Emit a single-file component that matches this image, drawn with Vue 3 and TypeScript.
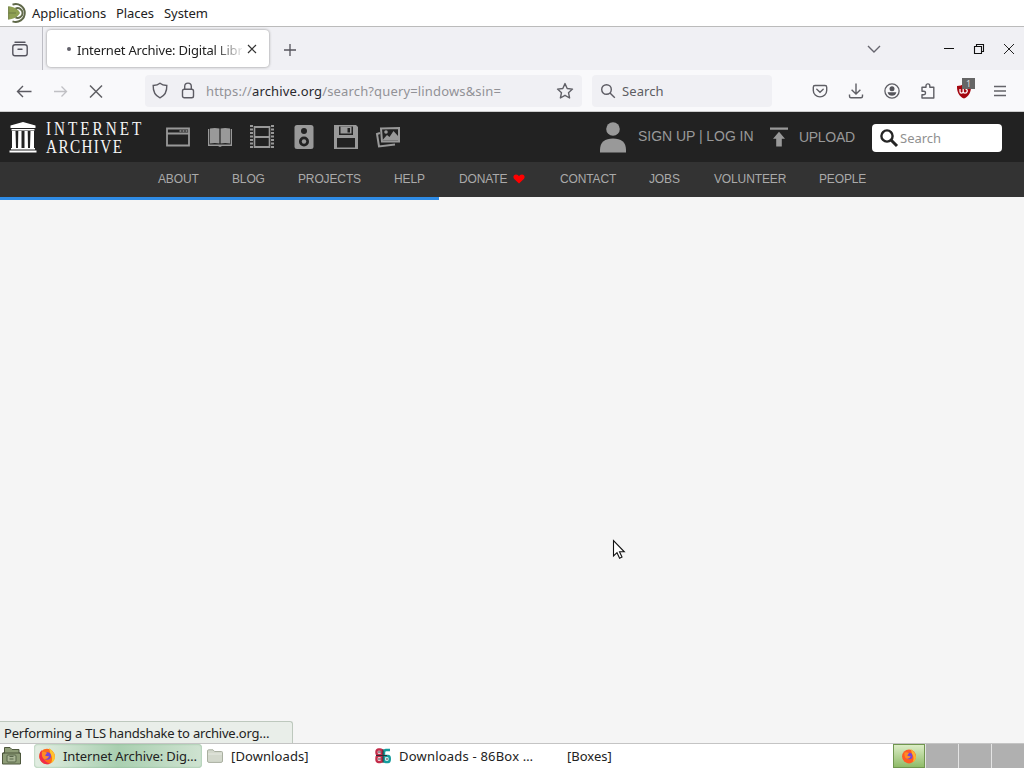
<script setup lang="ts">
interface NavLink { label: string; width: number; heart?: boolean }

const menus = [
  { label: 'Applications', width: 84 },
  { label: 'Places', width: 48 },
  { label: 'System', width: 50 },
]

const links: NavLink[] = [
  { label: 'ABOUT', width: 74 },
  { label: 'BLOG', width: 66 },
  { label: 'PROJECTS', width: 96 },
  { label: 'HELP', width: 65 },
  { label: 'DONATE', width: 101, heart: true },
  { label: 'CONTACT', width: 89 },
  { label: 'JOBS', width: 65 },
  { label: 'VOLUNTEER', width: 105 },
  { label: 'PEOPLE', width: 60 },
]

const progress = 439
</script>

<template>
  <div class="desktop">
    <header class="panel">
      <svg class="distro" width="22" height="22" viewBox="0 0 22 22">
        <path d="M1.500 4.200 C7 4.500 11 7 13 11 C11 14.500 7 17.200 1.500 17.500Z" fill="#8fa052" />
        <path d="M5.500 2.600 A9 9 0 1 1 5.500 19.400" fill="none" stroke="#5f6848" stroke-width="2" />
        <path d="M8.500 6.600 A4.900 4.900 0 1 1 8.500 15.400" fill="none" stroke="#626b4b" stroke-width="1.900" />
        <path d="M1.700 4.500V17.500M1.500 11H9" stroke="#6c7b42" stroke-width="1" />
      </svg>
      <span v-for="m in menus" :key="m.label" class="menu" :style="{ width: m.width + 'px' }">{{ m.label }}</span>
    </header>

    <div class="tabs">
      <div class="view-btn">
        <svg width="18" height="18" viewBox="0 0 18 18" fill="none" stroke="#55545e" stroke-width="1.400" stroke-linecap="round">
          <path d="M4 2.200H14" /><rect x="1.800" y="4.700" width="14.400" height="11" rx="2.200" /><path d="M7 9.300H11" />
        </svg>
      </div>
      <div class="tab">
        <i class="dot"></i>
        <span class="tab-title">Internet Archive: Digital Libr</span>
        <svg width="10" height="10" viewBox="0 0 10 10" stroke="#333" stroke-width="1.200"><path d="M1 1L9 9M9 1L1 9" /></svg>
      </div>
      <svg class="plus" width="14" height="14" viewBox="0 0 14 14" stroke="#55545c" stroke-width="1.300"><path d="M7 1V13M1 7H13" /></svg>
      <div class="window-ctl">
        <svg width="14" height="14" viewBox="0 0 14 14" fill="none" stroke="#66656e" stroke-width="1.400"><path d="M1 4L7 10L13 4" /></svg>
        <svg class="min" width="10" height="12" viewBox="0 0 10 12" stroke="#111"><path d="M0 5.500H10" /></svg>
        <svg class="max" width="12" height="12" viewBox="0 0 12 12" fill="none" stroke="#111" stroke-width="1.100"><path d="M1.500 3.500H8.500V10.500H1.500ZM3.500 3.500V1.500H10.500V8.500H8.500" /></svg>
        <svg class="cls" width="12" height="12" viewBox="0 0 12 12" stroke="#222" stroke-width="1"><path d="M1 1L11 11M11 1L1 11" /></svg>
      </div>
    </div>

    <div class="toolbar">
      <svg class="back" width="16" height="14" viewBox="0 0 16 14" fill="none" stroke="#5b5a61" stroke-width="1.400"><path d="M15.500 7.500H1.500M7 2L1.500 7.500L7 13" /></svg>
      <svg class="fwd" width="14" height="12" viewBox="0 0 14 12" fill="none" stroke="#c0c0c4" stroke-width="1.300"><path d="M0 6.500H12.500M7.500 1.500L12.500 6.500L7.500 11.500" /></svg>
      <svg class="stop" width="14" height="14" viewBox="0 0 14 14" stroke="#606065" stroke-width="1.500"><path d="M1 1.500L13 13.500M13 1.500L1 13.500" /></svg>
      <div class="url">
        <svg class="shield" width="16" height="17" viewBox="0 0 16 17" fill="none" stroke="#5c5b63" stroke-width="1.400"><path d="M8 1.200C6 2.800 3.500 3.300 1.200 3.500C1 9 2.800 13.500 8 15.800C13.200 13.500 15 9 14.800 3.500C12.500 3.300 10 2.800 8 1.200Z" /></svg>
        <svg class="lock" width="14" height="17" viewBox="0 0 14 17" fill="none" stroke="#5c5b63" stroke-width="1.400"><rect x="1.500" y="7.200" width="11" height="8.600" rx="1.800" /><path d="M3.700 7V4.400A3.300 3.300 0 0 1 10.300 4.400V7" /></svg>
        <span class="address">https://<b>archive.org</b>/search?query=lindows&amp;sin=</span>
        <svg class="star" width="18" height="18" viewBox="0 0 18 18" fill="none" stroke="#606067" stroke-width="1.400" stroke-linejoin="round"><path d="M9 1.600L11.200 6.500L16.500 7.100L12.500 10.700L13.600 16L9 13.300L4.400 16L5.500 10.700L1.500 7.100L6.800 6.500Z" /></svg>
      </div>
      <div class="find">
        <svg width="16" height="16" viewBox="0 0 16 16" fill="none" stroke="#5c5b63" stroke-width="1.400"><circle cx="6.500" cy="6.500" r="4.800" /><path d="M10 10L14.800 14.800" /></svg>
        <span>Search</span>
      </div>
      <div class="actions">
        <svg width="16" height="16" viewBox="0 0 16 16" fill="none" stroke="#5f5f65" stroke-width="1.400" stroke-linecap="round"><path d="M3 2.500H13Q14.700 2.500 14.700 4.200V7.500A6.700 6.400 0 0 1 1.300 7.500V4.200Q1.300 2.500 3 2.500ZM4.800 6.300L8 9.300L11.200 6.300" /></svg>
        <svg width="16" height="16" viewBox="0 0 16 16" fill="none" stroke="#5f5f65" stroke-width="1.400"><path d="M8 .5V11M3.600 6.700L8 11L12.400 6.700M1.500 11.500V13.300Q1.500 14.800 3 14.800H13Q14.500 14.800 14.500 13.300V11.500" /></svg>
        <svg width="16" height="16" viewBox="0 0 16 16"><circle cx="8" cy="8" r="7.100" fill="none" stroke="#5f5f65" stroke-width="1.300" /><circle cx="8" cy="5.800" r="2.500" fill="#55555b" /><path d="M3.600 9.300H12.400Q11.500 12.800 8 12.800T3.600 9.300Z" fill="#55555b" /></svg>
        <svg width="16" height="16" viewBox="0 0 16 16" fill="none" stroke="#5f5f65" stroke-width="1.400" stroke-linejoin="round"><path d="M2 4.300H6V2.800A1.900 1.900 0 0 1 9.800 2.800V4.300H13.800V15H2V11.800H3.800A1.700 1.700 0 0 0 3.800 8.300H2Z" /></svg>
        <div class="ublock">
          <svg width="16" height="16" viewBox="0 0 16 16"><path d="M8 .8C6 2.400 3.500 2.900 1 3C.8 9 3 13.500 8 15.500C13 13.500 15.200 9 15 3C12.500 2.900 10 2.400 8 .8Z" fill="#a40710" /><path d="M4 6V8.500Q4 10.200 5.500 10.200T7.200 8.500V6M7.200 8.500Q7.200 10.200 9 10.200T11.200 8.300T9.500 6.200" fill="none" stroke="#fff" stroke-width="1.300" /></svg>
          <span class="count">1</span>
        </div>
        <svg class="burger" width="14" height="16" viewBox="0 0 14 16" stroke="#64646a" stroke-width="1.300"><path d="M1 3.500H13M1 8H13M1 12.500H13" /></svg>
      </div>
    </div>

    <nav class="ia">
      <svg class="temple" width="28" height="32" viewBox="0 0 28 32" fill="#fff">
        <path d="M14 1L26.500 4.500V7H1.500V4.500ZM2.500 8H25.500V9.500H2.500ZM2 27H26V28.500H2ZM.5 29.500H27.500V31.500H.5Z" />
        <path d="M3 10H6.500L7 27H3ZM9.300 10H12.500V27H9ZM15.500 10H18.700L19 27H15.500ZM21.500 10H25V27H21Z" />
      </svg>
      <svg class="wordmark" width="100" height="40" viewBox="0 0 100 40" fill="#f5f5f5">
        <text transform="translate(1 18) scale(.8 1)" textLength="119">INTERNET</text>
        <text transform="translate(1 36) scale(.8 1)" textLength="95">ARCHIVE</text>
      </svg>
      <div class="media">
        <svg width="26" height="26" viewBox="0 0 26 26"><path d="M2 4.500H24V21.500H2ZM2 9.500H24" fill="none" stroke="#999" stroke-width="1.800" /><path d="M14.500 7H16.500M17.500 7H19.500M20.500 7H22.500" stroke="#999" stroke-width="1.500" /></svg>
        <svg width="26" height="26" viewBox="0 0 26 26" fill="#999"><path d="M3 4.500Q8 3.500 12.400 4.500V19.500Q8 18.500 3 19.500ZM13.600 4.500Q18 3.500 23 4.500V19.500Q18 18.500 13.600 19.500Z" /><path d="M1 5H2.300V20.500H23.700V5H25V22H15L13 23L11 22H1Z" /></svg>
        <svg width="26" height="26" viewBox="0 0 26 26" fill="none" stroke="#999"><path d="M5.500 2V24M20.500 2V24" stroke-width="1.600" /><path d="M5 3H21M5 13H21M5 23H21" stroke-width="2.200" /><path d="M2.500 1V25M23.500 1V25" stroke-width="3" stroke-dasharray="2 1.500" /></svg>
        <svg width="26" height="26" viewBox="0 0 26 26"><rect x="3.500" y="1" width="19" height="24" rx="2.500" fill="#999" /><circle cx="13" cy="7" r="3" fill="#222" /><circle cx="13" cy="17.500" r="5" fill="#222" /><circle cx="13" cy="17.500" r="2.200" fill="#999" /></svg>
        <svg width="26" height="26" viewBox="0 0 26 26"><path d="M1 1H23L25 3V25H1Z" fill="#999" /><path d="M6 2.500H20V11H6ZM4 14H22V23.500H4Z" fill="#222" /><path d="M7.500 2.500H18.500V9.500H7.500Z" fill="#999" /><path d="M14.500 4H17V8.500H14.500Z" fill="#222" /></svg>
        <svg width="26" height="26" viewBox="0 0 26 26"><path d="M5 9L2 10L4 22.500L20 20.500" fill="none" stroke="#999" stroke-width="2" /><path d="M6 4.500L24 4V17.500L7 17.500Z" fill="#222" stroke="#999" stroke-width="2" /><circle cx="11" cy="8" r="1.800" fill="#999" /><path d="M8 15.500L12 11L14.500 13L18.500 7L23 12V16.500H8Z" fill="#999" /></svg>
      </div>
      <svg class="person" width="26" height="31" viewBox="0 0 26 31" fill="#999"><circle cx="13" cy="7" r="6.800" /><path d="M0 30.500V28C0 20 5 16.500 13 16.500S26 20 26 28V30.500Z" /></svg>
      <span class="login">SIGN UP | LOG IN</span>
      <svg class="up" width="18" height="20" viewBox="0 0 18 20" fill="#999"><path d="M0 .5H18V2.700H0ZM9 4.800L15 11.800H11.800V19.500H6.200V11.800H3Z" /></svg>
      <span class="upload">UPLOAD</span>
      <div class="ia-search">
        <svg width="20" height="20" viewBox="0 0 20 20" fill="none" stroke="#252525"><circle cx="8" cy="8" r="5.600" stroke-width="2.400" /><path d="M12 12L18 18" stroke-width="3" /></svg>
        <span>Search</span>
      </div>
    </nav>
    <nav class="sub">
      <span v-for="l in links" :key="l.label" :style="{ width: l.width + 'px' }">{{ l.label }}<svg v-if="l.heart" width="12" height="10" viewBox="0 0 12 10"><path d="M6 9.500L1.200 5C-.5 3 .8 .5 3 .5C4.600 .5 5.500 1.500 6 2.300C6.500 1.500 7.400 .5 9 .5C11.200 .5 12.500 3 10.800 5Z" fill="#f00" /></svg></span>
    </nav>
    <main class="page">
      <div class="bar" :style="{ width: progress + 'px' }"></div>
      <svg class="cursor" width="14" height="22" viewBox="0 0 14 22"><path d="M1.500 1.500V17L5 13.700L7.600 19.200L10 18L7.500 12.800H12.300Z" fill="#fff" stroke="#111" stroke-width="1.100" /></svg>
      <div class="status"><span>Performing a TLS handshake to archive.org…</span></div>
    </main>

    <footer class="taskbar">
      <svg class="show" width="21" height="20" viewBox="0 0 21 20"><path d="M3.500 1.500H9L11 3.500H18V7H19.500V18H1.500V7H3.500Z" fill="#8e9d77" stroke="#4d573c" /><path d="M2 7H19" stroke="#4d573c" /><rect x="6" y="9" width="9" height="7" rx="1" fill="#a8b594" stroke="#59664a" /><path d="M8.500 10.500H12.500M8.500 13H12.500" stroke="#59664a" /></svg>
      <div class="task active">
        <svg class="fox" width="18" height="18" viewBox="0 0 18 18"><circle cx="9" cy="9.500" r="7.800" fill="#ff6a1a" /><path d="M1.500 11A7.800 7.800 0 0 0 12 16.700Q7 15 5 11L3.500 3Q1 6 1.500 11Z" fill="#ef2c4b" /><path d="M11 1Q17 5 17 11Q16 15 13 16Q15.500 11 12.500 7Z" fill="#ffc42d" /><circle cx="9.200" cy="9" r="3.700" fill="#7545d8" /><path d="M3.800 5Q7 4 9 6L7 8.500Q9 9.500 11 9Q10 12.500 6.500 12Q3.500 11 3.800 5Z" fill="#ff8b25" /></svg>
        <span>Internet Archive: Dig…</span>
      </div>
      <div class="task downloads">
        <svg width="16" height="14" viewBox="0 0 16 14"><path d="M.5 12V2Q.5 .8 1.700 .8H6L7.500 2.500H14.500Q15.500 2.500 15.500 3.500V12Q15.500 13.400 14 13.400H2Q.5 13.400 .5 12Z" fill="#d3d8cc" stroke="#a9afa0" /><path d="M1 5H15" stroke="#e6e9e1" /></svg>
        <span>[Downloads]</span>
      </div>
      <div class="task box">
        <svg width="16" height="16" viewBox="0 0 16 16" fill="none" stroke-width="2.400"><g stroke="#c32d4a"><rect x="1.500" y="1.500" width="5.500" height="5.500" rx="2" /><rect x="1.500" y="8" width="5.500" height="6" rx="2" /></g><g stroke="#159c9d"><path d="M15 2H11Q9 2 9 5V12Q9 14 11 14H13Q14.800 14 14.800 11T13 8H10" /></g><path d="M3 4H6M3 11H6M11 11H13M8 1V15M1 7.500H12" stroke="#332c35" stroke-width="1" /></svg>
        <span>Downloads - 86Box …</span>
      </div>
      <div class="task boxes"><span>[Boxes]</span></div>
      <div class="pager">
        <div class="ws on"><svg width="16" height="16" viewBox="0 0 18 18"><circle cx="9" cy="9.500" r="7.800" fill="#ff5a24" /><path d="M11 1Q17 5 17 11Q16 15 13 16Q15.500 11 12.500 7Z" fill="#ffb12d" /><circle cx="9.200" cy="9" r="3.700" fill="#7545d8" /><path d="M3.800 5Q7 4 9 6L7 8.500Q9 9.500 11 9Q10 12.500 6.500 12Q3.500 11 3.800 5Z" fill="#ff8b25" /></svg></div>
        <div class="ws"></div><div class="ws"></div><div class="ws"></div>
      </div>
    </footer>
  </div>
</template>

<style>
html, body { margin: 0; overflow: hidden; }
</style>

<style scoped>
* { box-sizing: border-box; }
.desktop { width: 1024px; height: 768px; display: flex; flex-direction: column; overflow: hidden; font: 13px/18px "Noto Sans", sans-serif; color: #222; white-space: nowrap; background: #fff; }
svg { display: block; flex: none; }
span { flex: none; }
.panel { height: 27px; flex: none; display: flex; align-items: center; border-bottom: 1px solid #bbb; padding: 0 0 1px 7px; }
.menu { letter-spacing: -0.05px; }
.distro { margin-right: 3px; }
.tabs { height: 43px; flex: none; display: flex; align-items: center; background: #f0f0f4; }
.view-btn { width: 43px; height: 43px; border-right: 1px solid #bdbdc4; padding: 13px 0 0 11px; }
.tab { width: 222px; height: 37px; margin: 0 0 0 4px; border-radius: 4px; background: #fff; box-shadow: 0 0 3px #888; display: flex; align-items: center; padding-left: 20px; }
.dot { width: 4px; height: 4px; background: #62616b; border-radius: 50%; margin: 0 6px 0 0; }
.tab-title { width: 165px; margin: 2px 5px 0 0; letter-spacing: -0.2px; mask-image: linear-gradient(90deg, #000 83%, transparent 102%); }
.plus { margin: 2px 0 0 14px; }
.window-ctl { margin-left: auto; width: 157px; display: flex; align-items: center; }
.min { margin-left: 63px; }
.max { margin-left: 19px; }
.cls { margin-left: 18px; }
.toolbar { height: 42px; flex: none; background: #f9f9fb; border-bottom: 1px solid #ccc; display: flex; align-items: center; }
.back { margin-left: 16px; }
.fwd { margin-left: 22px; }
.stop { margin-left: 21px; }
.url { width: 437px; height: 32px; margin-left: 42px; border-radius: 4px; background: #f0f0f4; display: flex; align-items: center; padding-left: 7px; }
.lock { margin-left: 13px; }
.address { width: 343px; margin-left: 11px; color: #929297; letter-spacing: 0.15px; }
.address b { font-weight: 400; color: #29282e; }
.star { margin-left: 7px; }
.find { width: 180px; height: 32px; margin-left: 10px; border-radius: 4px; background: #f0f0f4; color: #5d5d63; display: flex; align-items: center; gap: 6px; padding-left: 8px; letter-spacing: 0.1px; }
.actions { margin-left: 40px; display: flex; align-items: center; gap: 20px; }
.ublock { position: relative; }
.burger { margin-left: 1px; }
.count { position: absolute; left: 6px; top: -5px; width: 13px; height: 11px; background: #666; color: #ddd; font-size: 9px; line-height: 11px; text-align: center; }
.ia { height: 50px; flex: none; background: #222; display: flex; align-items: center; font-family: "Liberation Sans", Arial, sans-serif; color: #999; }
.temple { margin-left: 9px; }
.wordmark { margin-left: 8px; font: 19px "Liberation Serif", serif; overflow: visible; }
.media { display: flex; gap: 16px; margin-left: 20px; }
.person { margin-left: 199px; }
.login { margin: -2px 0 0 12px; width: 117px; font-size: 14px; letter-spacing: -0.04px; }
.up { margin-left: 15px; }
.upload { margin-left: 11px; width: 73px; font-size: 14px; letter-spacing: -0.3px; }
.ia-search { width: 130px; height: 28px; margin-top: 2px; border-radius: 4px; background: #fff; display: flex; align-items: center; padding-left: 7px; gap: 1px; font-family: "Noto Sans", sans-serif; color: #909090; }
.sub { height: 35px; flex: none; background: #333; display: flex; align-items: center; padding: 0 0 2px 158px; font: 12px/18px "Liberation Sans", Arial, sans-serif; letter-spacing: -0.13px; color: #aaa; }
.sub span { display: flex; align-items: center; }
.sub svg { margin-left: 6px; }
.page { flex: 1; position: relative; background: #f5f5f5; }
.bar { height: 3px; background: #2f8ce6; }
.cursor { position: absolute; left: 612px; top: 342px; }
.status { position: absolute; left: 0; bottom: 0; width: 293px; height: 22px; padding: 2px 0 0 4px; letter-spacing: -0.2px; background: #e9eee9; border: 1px solid #bdc8bd; border-left: 0; border-bottom: 0; border-radius: 0 3px 0 0; }
.taskbar { height: 25px; flex: none; border-top: 1px solid #c4c4c4; display: flex; align-items: center; background: #fff; }
.show { margin-left: 1px; }
.task { height: 24px; display: flex; align-items: center; }
.active { width: 168px; margin-left: 12px; padding-left: 4px; gap: 7px; border-radius: 4px; letter-spacing: -0.1px; background: linear-gradient(90deg, #e3eee3, #a9cfb0 50%, #cfe3d1); box-shadow: inset 0 0 2px #7fae88; }
.downloads { margin-left: 5px; gap: 8px; width: 168px; letter-spacing: 0.1px; }
.box { gap: 8px; width: 192px; letter-spacing: 0.2px; }
.boxes { width: 326px; }
.pager { display: flex; gap: 1px; height: 24px; background: #e4e4e4; }
.ws { width: 32px; background: #b0b0b0; }
.on { background: linear-gradient(#dcedc6, #8fbb68); border: 1px solid #70964f; display: flex; align-items: center; justify-content: center; }
</style>
